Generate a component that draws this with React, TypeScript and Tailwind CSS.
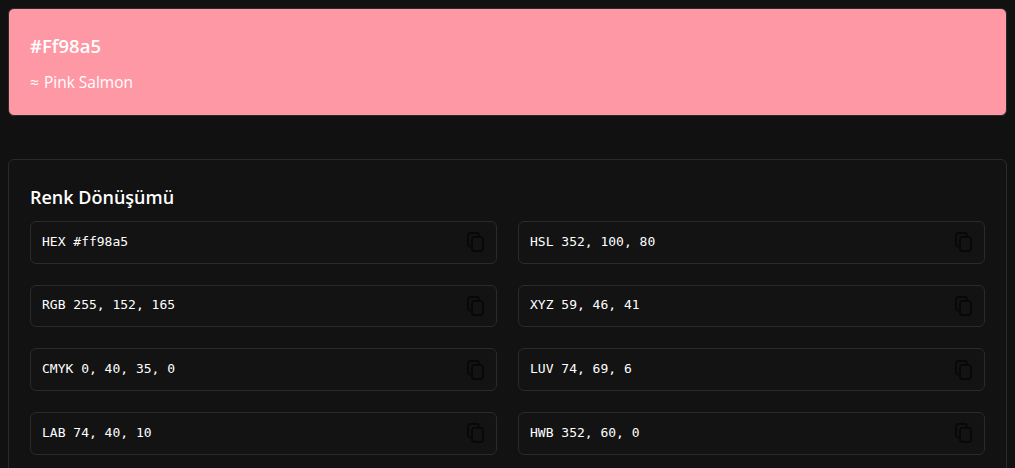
const rows = [
  ["HEX #ff98a5", "HSL 352, 100, 80"],
  ["RGB 255, 152, 165", "XYZ 59, 46, 41"],
  ["CMYK 0, 40, 35, 0", "LUV 74, 69, 6"],
  ["LAB 74, 40, 10", "HWB 352, 60, 0"],
];

const CopyIcon = () => (
  <svg width="17" height="20" viewBox="0 0 17 20" fill="none" stroke="#080808" strokeWidth="1.8" className="shrink-0">
    <rect x="1" y="1" width="11" height="13.5" rx="2.5" />
    <rect x="5" y="4.8" width="11" height="14.2" rx="2.5" fill="#131313" />
  </svg>
);

const ColorRow = ({ text }: { text: string }) => (
  <div className="flex h-[42.67px] items-center justify-between rounded-md border border-[#2a2a2a] bg-[#131313] pl-[11px] pr-[12px]">
    <span className="-mt-[2px] font-['DejaVu_Sans_Mono',monospace] text-[13px] text-white">{text}</span>
    <CopyIcon />
  </div>
);

export default function App() {
  return (
    <div className="h-[468px] overflow-hidden bg-[#111111] px-[8px] pt-[8px] font-['Open_Sans','Noto_Sans',sans-serif] text-white">
      <div className="h-[108px] rounded-md border border-[#2a2a2a] bg-[#ff98a5] px-[21px] pt-[23px]">
        <h1 className="text-[18.5px] leading-[28px] font-semibold">#Ff98a5</h1>
        <p className="mt-[10px] text-[15.5px] leading-[24px]">
          <span className="mr-[1px]">≈</span> Pink Salmon
        </p>
      </div>
      <div className="mt-[43px] rounded-md border border-[#2a2a2a] bg-[#121212] px-[21px] pt-[23px] pb-[21px]">
        <h2 className="mb-[10px] text-[18px] leading-[28px] font-semibold">Renk Dönüşümü</h2>
        <div className="grid grid-cols-2 gap-x-[21px] gap-y-[21px]">
          {rows.flat().map((text) => (
            <ColorRow key={text} text={text} />
          ))}
        </div>
      </div>
    </div>
  );
}
